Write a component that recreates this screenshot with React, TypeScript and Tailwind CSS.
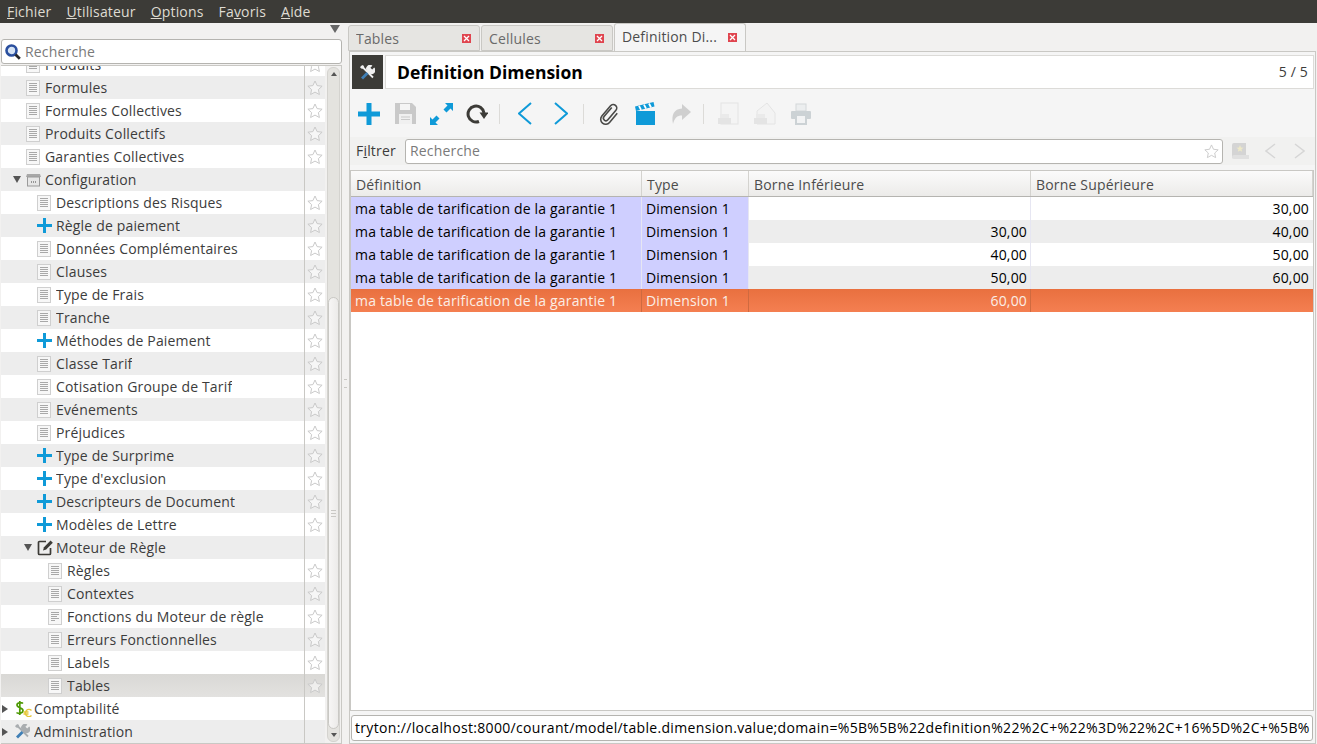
import type { ReactNode } from "react";

type TreeRow = {
  label: string;
  depth: number;
  icon: "doc" | "doc2" | "plus" | "box" | "edit" | "money" | "tools";
  arrow?: "down" | "right";
  noStar?: boolean;
  selected?: boolean;
};

const treeRows: TreeRow[] = [
  { label: "Produits", depth: 1, icon: "doc" },
  { label: "Formules", depth: 1, icon: "doc" },
  { label: "Formules Collectives", depth: 1, icon: "doc" },
  { label: "Produits Collectifs", depth: 1, icon: "doc" },
  { label: "Garanties Collectives", depth: 1, icon: "doc" },
  { label: "Configuration", depth: 1, icon: "box", arrow: "down", noStar: true },
  { label: "Descriptions des Risques", depth: 2, icon: "doc" },
  { label: "Règle de paiement", depth: 2, icon: "plus" },
  { label: "Données Complémentaires", depth: 2, icon: "doc" },
  { label: "Clauses", depth: 2, icon: "doc" },
  { label: "Type de Frais", depth: 2, icon: "doc" },
  { label: "Tranche", depth: 2, icon: "doc" },
  { label: "Méthodes de Paiement", depth: 2, icon: "plus" },
  { label: "Classe Tarif", depth: 2, icon: "doc" },
  { label: "Cotisation Groupe de Tarif", depth: 2, icon: "doc" },
  { label: "Evénements", depth: 2, icon: "doc" },
  { label: "Préjudices", depth: 2, icon: "doc" },
  { label: "Type de Surprime", depth: 2, icon: "plus" },
  { label: "Type d'exclusion", depth: 2, icon: "plus" },
  { label: "Descripteurs de Document", depth: 2, icon: "plus" },
  { label: "Modèles de Lettre", depth: 2, icon: "plus" },
  { label: "Moteur de Règle", depth: 2, icon: "edit", arrow: "down", noStar: true },
  { label: "Règles", depth: 3, icon: "doc" },
  { label: "Contextes", depth: 3, icon: "doc" },
  { label: "Fonctions du Moteur de règle", depth: 3, icon: "doc2" },
  { label: "Erreurs Fonctionnelles", depth: 3, icon: "doc" },
  { label: "Labels", depth: 3, icon: "doc" },
  { label: "Tables", depth: 3, icon: "doc", selected: true },
  { label: "Comptabilité", depth: 0, icon: "money", arrow: "right", noStar: true },
  { label: "Administration", depth: 0, icon: "tools", arrow: "right", noStar: true },
];

const tableRows = [
  { low: "", high: "30,00" },
  { low: "30,00", high: "40,00" },
  { low: "40,00", high: "50,00" },
  { low: "50,00", high: "60,00" },
  { low: "60,00", high: "" },
];

function DocIcon({ short }: { short?: boolean }) {
  return (
    <svg width="14" height="16" viewBox="0 0 14 16" className="shrink-0">
      <rect x="0.5" y="0.5" width="13" height="15" fill="#f7f7f7" stroke="#cfcfcf" />
      <path
        d={short ? "M3 3.500h8M3 5.500h8M3 7.500h6M3 9.500h8M3 11.500h4" : "M3 3.500h8M3 5.500h8M3 7.500h8M3 9.500h8M3 11.500h8"}
        stroke="#a8a8a8"
      />
    </svg>
  );
}

function BoxIcon() {
  return (
    <svg width="15" height="14" viewBox="0 0 15 14" className="shrink-0">
      <path d="M1 1h13l1 3H0z" fill="#a8a8a8" />
      <rect x="1.500" y="4" width="12" height="9" fill="#e6e6e6" stroke="#9a9a9a" />
      <path d="M5 9h1M7 9h1M9 9h1" stroke="#444" />
    </svg>
  );
}

function EditIcon() {
  return (
    <svg width="17" height="17" viewBox="0 0 17 17" className="shrink-0" fill="none">
      <path d="M9 2.500H2.500a1 1 0 0 0-1 1v11a1 1 0 0 0 1 1h10a1 1 0 0 0 1-1V9" stroke="#3c3b37" strokeWidth="1.700" />
      <path d="M6 11.500l1-3.200L13.600 1.600l2.200 2.200L9.200 10.400z" fill="#3c3b37" />
    </svg>
  );
}

// dollar and euro signs, drawn as strokes so they stay inside the box
function MoneyIcon() {
  return (
    <svg width="17" height="17" viewBox="0 0 17 17" className="shrink-0" fill="none">
      <path d="M8 3.500C7 2.500 2 2 2 5s6 2.500 6 5.500S3 14 1.500 12.500M4.800 1v14" stroke="#4e9a06" strokeWidth="1.700" />
      <path d="M16.500 10.500a3.600 3.600 0 1 0 0 5M8.500 12h5M8.500 14h5" stroke="#e5c63a" strokeWidth="1.400" />
    </svg>
  );
}

function ToolsIcon({ light }: { light?: boolean }) {
  const metal = light ? "#f0f0f0" : "#a9adb0";
  return (
    <svg width="15" height="15" viewBox="0 0 15 15" className="shrink-0" fill="none">
      <path d="M2.500 2l10.500 10.500" stroke={metal} strokeWidth="1.800" />
      <path d="M.8 1L3 0l1.200 2-2 2L.2 2.800z" fill={metal} />
      <path d="M2 13.500l5.500-5.500" stroke="#3f7fb5" strokeWidth="2.800" />
      <path d="M7.500 6.500a3.600 3.600 0 0 1 4.900-5.700l-2 2 1.800 1.800 2-2A3.600 3.600 0 0 1 9 8z" fill={metal} />
    </svg>
  );
}

function PlusIcon({ size, stroke }: { size: number; stroke: number }) {
  const mid = size / 2;
  return (
    <svg width={size} height={size} viewBox={`0 0 ${size} ${size}`} className="shrink-0">
      <path d={`M${mid} 0.500V${size - 0.5}M0.500 ${mid}H${size - 0.5}`} stroke="#0f9ad8" strokeWidth={stroke} strokeLinecap="round" />
    </svg>
  );
}

function Chevron({ dir, w, h, color, stroke }: { dir: "left" | "right"; w: number; h: number; color: string; stroke: number }) {
  const pts = dir === "left" ? `${w - 1},1 1,${h / 2} ${w - 1},${h - 1}` : `1,1 ${w - 1},${h / 2} 1,${h - 1}`;
  return (
    <svg width={w} height={h} viewBox={`0 0 ${w} ${h}`} className="shrink-0" fill="none">
      <polyline points={pts} stroke={color} strokeWidth={stroke} />
    </svg>
  );
}

function Star({ size = 16 }: { size?: number }) {
  return (
    <svg width={size} height={size} viewBox="0 0 16 16" className="shrink-0">
      <path
        d="M8 1l2.100 4.600 5 .6-3.700 3.400 1 4.900L8 12.100 3.600 14.500l1-4.900L.9 6.200l5-.6z"
        fill="#ffffff"
        fillOpacity="0.5"
        stroke="#cacaca"
      />
    </svg>
  );
}

function Arrow({ dir }: { dir: "down" | "right" }) {
  return dir === "down" ? (
    <span className="h-0 w-0 shrink-0 border-x-[4px] border-t-[7px] border-x-transparent border-t-[#555]" />
  ) : (
    <span className="h-0 w-0 shrink-0 border-y-[4px] border-l-[6px] border-y-transparent border-l-[#555]" />
  );
}

function TreeIcon({ icon }: { icon: TreeRow["icon"] }) {
  if (icon === "doc") return <DocIcon />;
  if (icon === "doc2") return <DocIcon short />;
  if (icon === "box") return <BoxIcon />;
  if (icon === "edit") return <EditIcon />;
  if (icon === "money") return <MoneyIcon />;
  if (icon === "tools") return <ToolsIcon />;
  return <PlusIcon size={15} stroke={3} />;
}

function Tree() {
  return (
    <div className="flex-1 overflow-hidden">
      <div className="-mt-[13px]">
        {treeRows.map((row, i) => {
          const bg = row.selected
            ? "bg-gradient-to-b from-[#d9d8d5] to-[#e3e2e0]"
            : i % 2 === 1
              ? "bg-[#ededed]"
              : "bg-white";
          // indentation per depth, the arrow sits in front of the icon
          const indent = row.depth === 0 ? "pl-[1px]" : row.depth === 1 ? "pl-[12px]" : row.depth === 2 ? "pl-[23px]" : "pl-[34px]";
          return (
            <div key={row.label} className={`flex h-[23px] items-stretch ${bg}`}>
              <div className={`flex w-[303px] items-center ${indent}`}>
                <span className="flex w-[13px] shrink-0 items-center">{row.arrow && <Arrow dir={row.arrow} />}</span>
                <span className="flex w-[19px] shrink-0 items-center">
                  <TreeIcon icon={row.icon} />
                </span>
                <span className="truncate">{row.label}</span>
              </div>
              <div className="flex flex-1 items-center justify-center border-l border-[#c9c8c4]">
                {!row.noStar && <Star />}
              </div>
            </div>
          );
        })}
      </div>
    </div>
  );
}

function Scrollbar() {
  return (
    <div className="flex w-[16px] shrink-0 justify-end bg-[#f2f1f0] py-[1px] pr-[1px]">
      <div className="flex w-[13px] flex-col items-center rounded-[6px] border border-[#d4d3cf] bg-[#e4e3df]">
        <div className="flex h-[12px] w-full items-center justify-center">
          <span className="h-0 w-0 border-x-[3px] border-b-[4px] border-x-transparent border-b-[#555]" />
        </div>
        <div className="h-[217px] w-full shrink-0" />
        <div className="flex min-h-0 w-full flex-1 items-center justify-center rounded-[6px] border border-[#c9c8c4] bg-gradient-to-r from-[#f7f6f5] to-[#ecebe9]">
          <span className="h-[7px] w-[5px] border-y border-[#c9c8c4] bg-[linear-gradient(#c9c8c4,#c9c8c4)] bg-[length:100%_1px] bg-center bg-no-repeat" />
        </div>
        <div className="flex h-[12px] w-full items-center justify-center">
          <span className="h-0 w-0 border-x-[3px] border-t-[4px] border-x-transparent border-t-[#555]" />
        </div>
      </div>
    </div>
  );
}

function CloseBox() {
  return (
    <span className="flex h-[9px] w-[9px] shrink-0 items-center justify-center bg-[#e0454f] text-white">
      <svg width="7" height="7" viewBox="0 0 7 7">
        <path d="M1 1l5 5M6 1L1 6" stroke="#fff" strokeWidth="1.300" />
      </svg>
    </span>
  );
}

function Tab({ label, active }: { label: string; active?: boolean }) {
  return (
    <div
      className={`flex w-[132px] items-center justify-between rounded-t-[3px] border border-[#c9c8c4] pl-[7px] pr-[8px] ${
        active ? "h-[28px] border-b-0 bg-[#f5f5f5] pb-[1px] text-[#4c4c4c]" : "h-[26px] bg-[#e6e5e2] pt-[1px] text-[#6a6a6a]"
      }`}
    >
      <span className="truncate">{label}</span>
      <CloseBox />
    </div>
  );
}

function ToolButton({ children, className = "" }: { children: ReactNode; className?: string }) {
  return <div className={`flex h-[24px] w-[36px] items-center justify-center ${className}`}>{children}</div>;
}

function Separator() {
  return <div className="mx-[4px] h-[20px] w-px bg-[#dcdbd8]" />;
}

function Toolbar() {
  return (
    <div className="flex h-[48px] shrink-0 items-center bg-[#f5f5f5] pl-[1px] pt-[1px]">
      <ToolButton>
        <PlusIcon size={22} stroke={5} />
      </ToolButton>
      <ToolButton>
        <svg width="23" height="23" viewBox="0 0 23 23">
          <path d="M1 1h17l4 4v17H1z" fill="#c9c9c9" />
          <rect x="6" y="2" width="10" height="6" fill="#f5f5f5" />
          <rect x="5" y="12" width="13" height="10" fill="#f0f0f0" />
          <path d="M7 15h9M7 17.500h9" stroke="#c9c9c9" />
        </svg>
      </ToolButton>
      <ToolButton>
        <svg width="25" height="24" viewBox="0 0 25 24">
          <path d="M16 1h8v8l-2.500-2.500-4 4-3-3 4-4zM9 23H1v-8l2.500 2.500 4-4 3 3-4 4z" fill="#0f9ad8" />
        </svg>
      </ToolButton>
      <ToolButton>
        <svg width="22" height="22" viewBox="0 0 22 22" fill="none">
          <path d="M13 18.500A8 8 0 1 1 18 10" stroke="#3c3b37" strokeWidth="3" />
          <path d="M13.500 9.500h9L18 16z" fill="#3c3b37" />
        </svg>
      </ToolButton>
      <Separator />
      <ToolButton className="ml-[3px]">
        <Chevron dir="left" w={14} h={23} color="#0f9ad8" stroke={2} />
      </ToolButton>
      <ToolButton>
        <Chevron dir="right" w={14} h={23} color="#0f9ad8" stroke={2} />
      </ToolButton>
      <Separator />
      <ToolButton className="ml-[3px]">
        <svg width="23" height="24" viewBox="0 0 23 24" fill="none">
          <path
            d="M9 5v12a2.500 2.500 0 0 0 5 0V4.500a3.500 3.500 0 0 0-7 0V18a5 5 0 0 0 10 0V6"
            stroke="#4a4a48"
            strokeWidth="1.600"
            transform="rotate(40 11.500 12) translate(0 0.500)"
          />
        </svg>
      </ToolButton>
      <ToolButton>
        <svg width="20" height="23" viewBox="0 0 20 23">
          <rect x="1" y="9" width="19" height="14" fill="#0f9ad8" />
          <path d="M0 4.500L18.500 0l1 4.500L1 9z" fill="#0f9ad8" />
          <path d="M4 3.800l2 4M9 2.700l2 4M14 1.500l2 4" stroke="#fff" strokeWidth="1.800" />
        </svg>
      </ToolButton>
      <ToolButton>
        <svg width="20" height="21" viewBox="0 0 20 21">
          <path d="M11 1l9 8-9 8v-4.500C6 12.500 3.500 15 2 21 0 12 3 6 11 5.500z" fill="#cfcfcf" />
        </svg>
      </ToolButton>
      <Separator />
      <ToolButton className="ml-[2px]">
        <svg width="22" height="23" viewBox="0 0 22 23">
          <rect x="4" y="1" width="17" height="21" fill="#f4f4f4" stroke="#e4e4e4" />
          <rect x="1" y="16" width="13" height="6" fill="#e4e4e4" />
          <rect x="3" y="12" width="9" height="4" fill="#eaeaea" />
        </svg>
      </ToolButton>
      <ToolButton>
        <svg width="23" height="23" viewBox="0 0 23 23">
          <path d="M4 9l10-8 8 10v11H4z" fill="#f3f3f3" stroke="#e4e4e4" />
          <rect x="1" y="16" width="13" height="6" fill="#e4e4e4" />
          <rect x="3" y="12" width="9" height="4" fill="#eaeaea" />
        </svg>
      </ToolButton>
      <ToolButton className="ml-[1px]">
        <svg width="20" height="22" viewBox="0 0 20 22">
          <rect x="5" y="1" width="10" height="7" fill="#eceeef" stroke="#d4d8da" />
          <rect x="0" y="8" width="20" height="8" rx="1" fill="#ccd2d5" />
          <rect x="5" y="12" width="10" height="9" fill="#f2f3f4" stroke="#ccd2d5" strokeWidth="2" />
        </svg>
      </ToolButton>
    </div>
  );
}

function FilterBar() {
  return (
    <div className="flex h-[28px] shrink-0 items-center bg-[#f1f1f0] pl-[6px] pr-[4px]">
      <span className="w-[49px] shrink-0 text-[#3c3c3c]">
        F<span className="underline">i</span>ltrer
      </span>
      <div className="flex h-[25px] w-[818px] items-center justify-between rounded-[3px] border border-[#b5b4b0] bg-white pl-[4px] pr-[3px]">
        <span className="text-[#7a7a7a]">Recherche</span>
        <Star size={15} />
      </div>
      <div className="ml-[8px] flex flex-1 items-center pr-[2px]">
        <svg width="18" height="18" viewBox="0 0 18 18" className="shrink-0">
          <path d="M1 3a2 2 0 0 1 2-2h12v14H3a2 2 0 0 0-2 2z" fill="#d4d4d4" />
          <path d="M1 15a2 2 0 0 1 2-2h15v4H3a2 2 0 0 1-2-2z" fill="#e0e0e0" />
          <path d="M9 3l1 2.500 2.500.2-2 1.600.7 2.500L9 8.500l-2.200 1.300.7-2.500-2-1.600 2.500-.2z" fill="#eee9c8" />
        </svg>
        <span className="ml-[16px]">
          <Chevron dir="left" w={11} h={16} color="#d6d6d6" stroke={1.500} />
        </span>
        <span className="ml-[18px]">
          <Chevron dir="right" w={11} h={16} color="#d6d6d6" stroke={1.500} />
        </span>
      </div>
    </div>
  );
}

function HeaderCell({ label, width }: { label: string; width: string }) {
  return (
    <div className={`flex h-full items-center border-r border-[#d4d3cf] pl-[5px] pt-[2px] ${width}`}>{label}</div>
  );
}

function DataTable() {
  return (
    <div className="mr-[1px] flex min-h-0 flex-1 flex-col border border-[#c9c8c4] bg-white">
      <div className="flex h-[26px] shrink-0 border-b border-[#b5b4b0] bg-gradient-to-b from-[#fbfbfb] to-[#ecebe9] text-[#4c4c4c]">
        <HeaderCell label="Définition" width="w-[291px]" />
        <HeaderCell label="Type" width="w-[107px]" />
        <HeaderCell label="Borne Inférieure" width="w-[282px]" />
        <HeaderCell label="Borne Supérieure" width="flex-1" />
      </div>
      {tableRows.map((row, i) => {
        const selected = i === tableRows.length - 1;
        const rest = selected ? "" : i % 2 === 1 ? "bg-[#ededed]" : "bg-white";
        const first = selected ? "" : "bg-[#cfcfff]";
        const text = selected ? "bg-gradient-to-b from-[#e9703f] to-[#f47f51] text-[#fbeee6]" : "text-black";
        const cell = "flex h-full items-center border-r";
        const line = selected ? "border-[#cf6a40]" : "border-[#e6e6f2]";
        return (
          <div key={i} className={`flex h-[23px] shrink-0 ${text}`}>
            <div className={`${cell} ${line} ${first} w-[291px] pl-[4px]`}>ma table de tarification de la garantie 1</div>
            <div className={`${cell} ${line} ${first} w-[107px] pl-[4px]`}>Dimension 1</div>
            <div className={`${cell} ${line} ${rest} w-[282px] justify-end pr-[3px]`}>{row.low}</div>
            <div className={`flex h-full flex-1 items-center justify-end pr-[4px] ${rest}`}>{row.high}</div>
          </div>
        );
      })}
    </div>
  );
}

export default function App() {
  return (
    <div className="flex h-[744px] w-[1317px] flex-col overflow-hidden bg-[#f2f1f0] font-['Open_Sans',sans-serif] text-[14px] leading-[20px] tracking-[0.17px] text-[#3c3c3c]">
      {/* Menu bar */}
      <div className="flex h-[23px] shrink-0 items-center gap-[15px] bg-[#3c3b37] pl-[7px] pt-[1px] text-[#dfdbd2]">
        <span><span className="underline">F</span>ichier</span>
        <span><span className="underline">U</span>tilisateur</span>
        <span><span className="underline">O</span>ptions</span>
        <span>Fa<span className="underline">v</span>oris</span>
        <span><span className="underline">A</span>ide</span>
      </div>

      <div className="flex min-h-0 flex-1">
        {/* Left pane */}
        <div className="flex w-[342px] shrink-0 flex-col pl-[1px]">
          <div className="flex h-[16px] shrink-0 justify-end pr-[2px] pt-[2px]">
            <span className="h-0 w-0 border-x-[5px] border-t-[8px] border-x-transparent border-t-[#666]" />
          </div>
          <div className="flex h-[25px] shrink-0 items-center rounded-[3px] border border-[#b5b4b0] bg-white pl-[3px] text-[#7a7a7a]">
            <svg width="16" height="16" viewBox="0 0 16 16" className="mr-[4px] shrink-0">
              <circle cx="6.500" cy="6.500" r="5" fill="#d5e3f5" stroke="#2a4f9e" strokeWidth="2.600" />
              <path d="M10.500 10.500l4.300 4.300" stroke="#26262a" strokeWidth="2.800" />
            </svg>
            Recherche
          </div>
          <div className="mt-[1px] flex min-h-0 flex-1 border border-l-0 border-[#c9c8c4]">
            <Tree />
            <Scrollbar />
          </div>
        </div>

        {/* Pane handle */}
        <div className="flex w-[7px] shrink-0 items-center justify-center">
          <span className="h-[9px] w-[3px] border-y border-[#c9c8c4]" />
        </div>

        {/* Right pane */}
        <div className="flex min-w-0 flex-1 flex-col pr-[1px]">
          <div className="-ml-[1px] flex h-[28px] shrink-0 items-end gap-[1px]">
            <Tab label="Tables" />
            <Tab label="Cellules" />
            <Tab label="Definition Di..." active />
          </div>
          <div className="flex min-h-0 flex-1 flex-col border border-[#c9c8c4] bg-[#f5f5f5] pb-[1px] pt-[3px]">
            <div className="flex h-[34px] shrink-0 gap-[2px] pl-[2px] pr-[1px]">
              <div className="flex w-[31px] items-center justify-center bg-[#3c3b37]">
                <ToolsIcon light />
              </div>
              <div className="flex flex-1 items-center justify-between border border-[#dcdbd8] bg-white pl-[11px] pr-[5px]">
                <span className="text-[17.5px] font-bold tracking-normal text-black">Definition Dimension</span>
                <span>5 / 5</span>
              </div>
            </div>
            <Toolbar />
            <FilterBar />
            <div className="h-[5px] shrink-0" />
            <DataTable />
            <div className="mb-[1px] ml-[1px] mr-[2px] mt-[4px] flex h-[26px] shrink-0 items-center overflow-hidden whitespace-nowrap rounded-[3px] border border-[#b5b4b0] bg-white pl-[3px] tracking-[0.33px] text-black">
              tryton://localhost:8000/courant/model/table.dimension.value;domain=%5B%5B%22definition%22%2C+%22%3D%22%2C+16%5D%2C+%5B%
            </div>
          </div>
        </div>
      </div>
    </div>
  );
}
